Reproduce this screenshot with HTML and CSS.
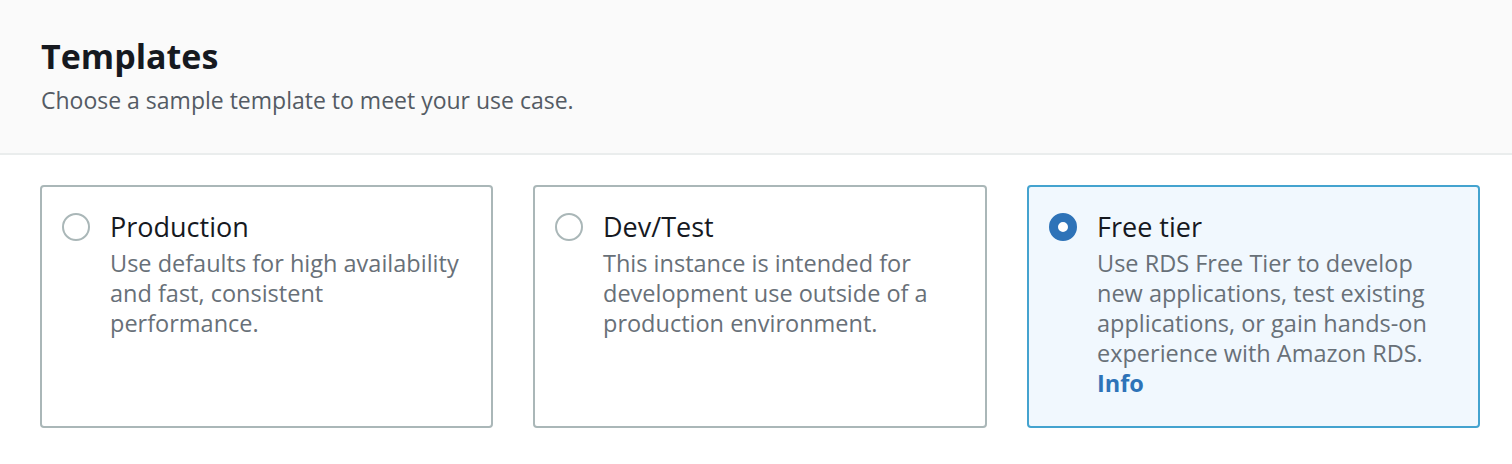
FILE: index.html
```html
<!DOCTYPE html>
<html lang="en">
<head>
<meta charset="utf-8">
<title>Templates</title>
<link rel="stylesheet" href="styles.css">
</head>
<body>
<section class="panel">
  <header class="panel-header">
    <h2 class="panel-title">Templates</h2>
    <p class="panel-desc">Choose a sample template to meet your use case.</p>
  </header>
  <div class="tiles">
    <label class="tile">
      <span class="radio"></span>
      <span class="tile-body">
        <span class="tile-title">Production</span>
        <span class="tile-desc">Use defaults for high availability and fast, consistent performance.</span>
      </span>
    </label>
    <label class="tile">
      <span class="radio"></span>
      <span class="tile-body">
        <span class="tile-title">Dev/Test</span>
        <span class="tile-desc">This instance is intended for development use outside of a production environment.</span>
      </span>
    </label>
    <label class="tile tile-selected">
      <span class="radio radio-checked"></span>
      <span class="tile-body">
        <span class="tile-title">Free tier</span>
        <span class="tile-desc">Use RDS Free Tier to develop new applications, test existing applications, or gain hands-on experience with Amazon RDS.</span>
        <a class="info" href="#">Info</a>
      </span>
    </label>
  </div>
</section>
</body>
</html>
```

FILE: styles.css
```css
* { box-sizing: border-box; }
html, body { margin: 0; padding: 0; background: #ffffff; }
body {
  font-family: "Open Sans", "Noto Sans", sans-serif;
  color: #16191f;
  width: 1512px;
  height: 464px;
  overflow: hidden;
}
.panel-header {
  background: #fafafa;
  border-bottom: 2px solid #eaeded;
  height: 155px;
  padding: 34px 40px 0 41px;
}
.panel-title {
  margin: 0;
  font-size: 34px;
  line-height: 44px;
  font-weight: 700;
  color: #16191f;
}
.panel-desc {
  margin: 6px 0 0 0;
  font-size: 23px;
  line-height: 32px;
  color: #545b64;
}
.tiles {
  display: grid;
  grid-template-columns: 453px 454px 453px;
  column-gap: 40px;
  padding: 30px 0 0 40px;
}
.tile {
  display: flex;
  gap: 20px;
  height: 243px;
  border: 2px solid #aab7b8;
  border-radius: 4px;
  padding: 23px 20px 20px 20px;
  background: #ffffff;
}
.tile-selected {
  border-color: #44a3cf;
  background: #f1f8fe;
}
.radio {
  flex: none;
  width: 28px;
  height: 28px;
  margin-top: 3px;
  border-radius: 50%;
  border: 2px solid #aab7b8;
  background: #ffffff;
}
.radio-checked {
  border: 9px solid #2e73b8;
  background: #ffffff;
}
.tile-body {
  display: flex;
  flex-direction: column;
  width: 362px;
}
.tile-title {
  font-size: 27px;
  line-height: 34px;
  margin-bottom: 4px;
  color: #16191f;
}
.tile-desc {
  font-size: 23.5px;
  line-height: 30px;
  color: #687078;
}
.info {
  font-size: 23.5px;
  line-height: 30px;
  color: #2e73b8;
  font-weight: 700;
  text-decoration: none;
}
```
